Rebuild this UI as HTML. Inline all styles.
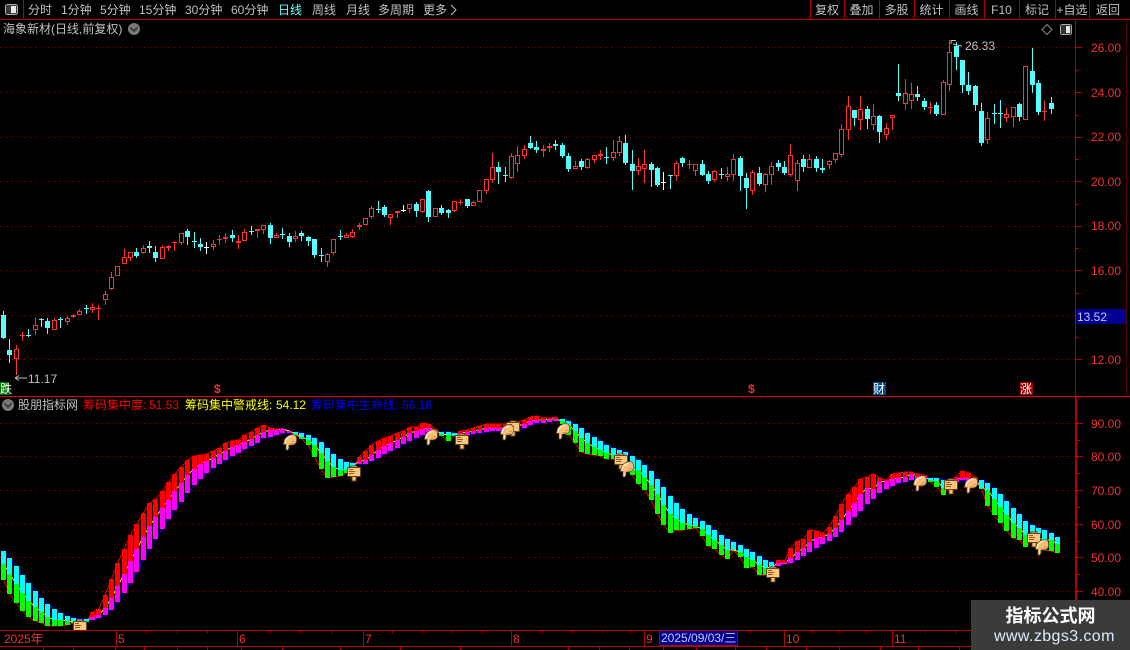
<!DOCTYPE html>
<html lang="zh"><head><meta charset="utf-8"><title>海象新材</title>
<style>
html,body{margin:0;padding:0;background:#000;width:1130px;height:650px;overflow:hidden}
body{position:relative;font-family:"Liberation Sans","WenQuanYi Zen Hei","Noto Sans CJK SC",sans-serif;font-size:12px;color:#c0c0c0}
svg{position:absolute;left:0;top:0}
.t{position:absolute;white-space:nowrap;line-height:14px}
.c{text-align:center}
.p{color:#f03232;letter-spacing:0}
.a{color:#f03232}
</style></head><body>
<svg id="s" width="1130" height="650" viewBox="0 0 1130 650" shape-rendering="crispEdges">
<defs>
<symbol id="hand" viewBox="0 0 14 16" overflow="visible">
<path d="M.5 9.500L1.500 5.500L3.500 3L6 1.500L9 .5L12 1L13.500 3.500L13.500 8L12 10L9.500 11L6 11L6 14L5 16L3 16L3 10.500L.5 10.500Z" fill="#f9bf78" stroke="#6a4520" stroke-width=".7" shape-rendering="auto"/>
<path d="M2 9L3 5.500L6 3L9 2" fill="none" stroke="#fff0dc" stroke-width="1.100" shape-rendering="auto"/>
<path d="M4 11V15" stroke="#fff0dc" stroke-width="1" shape-rendering="auto"/>
<path d="M7 9.500H11M9 7.500H12" stroke="#d08a40" stroke-width=".7" shape-rendering="auto"/>
</symbol>
<symbol id="sign" viewBox="0 0 14 15" overflow="visible">
<rect x="4" y="0" width="6" height="2" fill="#f9c680" stroke="#6d4414" stroke-width=".6"/>
<rect x="5" y="10" width="4" height="5" fill="#f9c680" stroke="#6d4414" stroke-width=".8"/>
<rect x=".5" y="1.500" width="13" height="9" rx="1" fill="#f9c680" stroke="#6d4414"/>
<rect x="2" y="3" width="4" height="1" fill="#8f5c20"/>
<rect x="2" y="5" width="6" height="1" fill="#8f5c20"/>
<rect x="2" y="7" width="5" height="1" fill="#8f5c20"/>
</symbol>
</defs>
<g id="grid"></g><g id="ind"></g><g id="can"></g>
<use href="#hand" x="283" y="434" width="14" height="16"/>
<use href="#hand" x="424" y="429" width="14" height="16"/>
<use href="#sign" x="506" y="421" width="14" height="15"/>
<use href="#hand" x="500" y="424" width="14" height="16"/>
<use href="#hand" x="556" y="423" width="14" height="16"/>
<use href="#sign" x="614" y="454" width="14" height="15"/>
<use href="#hand" x="620" y="461" width="14" height="16"/>
<use href="#hand" x="913" y="475" width="14" height="16"/>
<use href="#hand" x="964" y="477" width="14" height="16"/>
<use href="#sign" x="1027" y="532" width="14" height="15"/>
<use href="#hand" x="1035" y="539" width="14" height="16"/>
<use href="#sign" x="73" y="620" width="14" height="15"/>
<use href="#sign" x="347" y="466" width="14" height="15"/>
<use href="#sign" x="455" y="434" width="14" height="15"/>
<use href="#sign" x="766" y="567" width="14" height="15"/>
<use href="#sign" x="944" y="479" width="14" height="15"/>
<rect x="0" y="630" width="1075" height="20" fill="#000"/>
<g id="fr"></g>
<!-- top-left icon -->
<rect x="5.500" y="4.500" width="12" height="10" rx="2" fill="#3a3a3a" stroke="#a8a8a8"/>
<rect x="11" y="6" width="5" height="7" fill="#e8e8e8"/>
<!-- top right icons -->
<path shape-rendering="auto" d="M1047 24.500L1052 29.500L1047 34.500L1042 29.500Z" fill="none" stroke="#8a8a8a"/>
<rect x="1060.500" y="24.500" width="11" height="10" rx="2" fill="#333" stroke="#a8a8a8"/>
<rect x="1066" y="26" width="4" height="7" fill="#e8e8e8"/>
<!-- chevrons -->
<circle shape-rendering="auto" cx="134" cy="29" r="6" fill="#787878"/>
<path shape-rendering="auto" d="M130.500 27.500L134 31L137.500 27.500" fill="none" stroke="#2a2a2a" stroke-width="1.500"/>
<circle shape-rendering="auto" cx="8" cy="405" r="6" fill="#787878"/>
<path shape-rendering="auto" d="M4.500 403.500L8 407L11.500 403.500" fill="none" stroke="#2a2a2a" stroke-width="1.500"/>
<!-- more chevron -->
<path shape-rendering="auto" d="M451 5L456 10L451 15" fill="none" stroke="#c0c0c0"/>
<!-- low/high arrows -->
<path shape-rendering="auto" d="M15 378H27M15 378L19 375.500M15 378L19 380.500" fill="none" stroke="#c0c0c0"/>
<path shape-rendering="auto" d="M951 40.500H956M953 44L962 46M951 40.500L951 44" fill="none" stroke="#c0c0c0"/>
<!-- watermark -->
<rect x="971" y="600" width="159" height="50" fill="#3d3a3a"/>
<!-- blue boxes -->
<rect x="1076" y="309" width="50" height="15" fill="#000090"/>
<rect x="659.500" y="630.500" width="78" height="15" fill="#000090" stroke="#b00000"/>
<!-- signals -->
<rect x="0" y="382" width="9" height="13" fill="#007a00"/>
<rect x="873" y="382" width="13" height="13" fill="#004a8a"/>
<rect x="1020" y="382" width="13" height="13" fill="#a00000"/>
</svg>

<div class="t" style="left:28px;top:3px">分时</div>
<div class="t" style="left:61px;top:3px">1分钟</div>
<div class="t" style="left:100px;top:3px">5分钟</div>
<div class="t" style="left:139px;top:3px">15分钟</div>
<div class="t" style="left:185px;top:3px">30分钟</div>
<div class="t" style="left:231px;top:3px">60分钟</div>
<div class="t" style="left:278px;top:3px;color:#66ffff">日线</div>
<div class="t" style="left:312px;top:3px">周线</div>
<div class="t" style="left:346px;top:3px">月线</div>
<div class="t" style="left:378px;top:3px">多周期</div>
<div class="t" style="left:423px;top:3px">更多</div>

<div class="t c" style="left:810px;width:34px;top:3px">复权</div>
<div class="t c" style="left:844px;width:35px;top:3px">叠加</div>
<div class="t c" style="left:879px;width:35px;top:3px">多股</div>
<div class="t c" style="left:914px;width:35px;top:3px">统计</div>
<div class="t c" style="left:949px;width:35px;top:3px">画线</div>
<div class="t c" style="left:984px;width:35px;top:3px">F10</div>
<div class="t c" style="left:1019px;width:36px;top:3px">标记</div>
<div class="t c" style="left:1055px;width:34px;top:3px">+自选</div>
<div class="t c" style="left:1089px;width:38px;top:3px">返回</div>

<div class="t" style="left:3px;top:22px">海象新材(日线,前复权)</div>
<div class="t" style="left:965px;top:39px">26.33</div>
<div class="t" style="left:28px;top:372px">11.17</div>

<div class="t p" style="left:1091px;top:41px">26.00</div>
<div class="t p" style="left:1091px;top:86px">24.00</div>
<div class="t p" style="left:1091px;top:130px">22.00</div>
<div class="t p" style="left:1091px;top:175px">20.00</div>
<div class="t p" style="left:1091px;top:219px">18.00</div>
<div class="t p" style="left:1091px;top:264px">16.00</div>
<div class="t p" style="left:1091px;top:353px">12.00</div>
<div class="t" style="left:1077px;top:310px;color:#c8c8ff">13.52</div>

<div class="t" style="left:0;top:382px;color:#fff">跌</div>
<div class="t" style="left:214px;top:382px;color:#f03030;font-weight:bold">$</div>
<div class="t" style="left:748px;top:382px;color:#f03030;font-weight:bold">$</div>
<div class="t" style="left:873px;top:382px;color:#fff">财</div>
<div class="t" style="left:1020px;top:382px;color:#fff">涨</div>

<div class="t" style="left:18px;top:398px">股朋指标网</div>
<div class="t" style="left:83px;top:398px;color:#f00">筹码集中度:</div>
<div class="t" style="left:149px;top:398px;color:#f00">51.53</div>
<div class="t" style="left:185px;top:398px;color:#ff0">筹码集中警戒线:</div>
<div class="t" style="left:276px;top:398px;color:#ff0">54.12</div>
<div class="t" style="left:311px;top:398px;color:#00f">筹码集中生命线:</div>
<div class="t" style="left:402px;top:398px;color:#00f">56.16</div>

<div class="t p" style="left:1091px;top:417px">90.00</div>
<div class="t p" style="left:1091px;top:450px">80.00</div>
<div class="t p" style="left:1091px;top:484px">70.00</div>
<div class="t p" style="left:1091px;top:518px">60.00</div>
<div class="t p" style="left:1091px;top:551px">50.00</div>
<div class="t p" style="left:1091px;top:585px">40.00</div>

<div class="t a" style="left:4px;top:632px">2025年</div>
<div class="t a" style="left:118px;top:632px">5</div>
<div class="t a" style="left:239px;top:632px">6</div>
<div class="t a" style="left:365px;top:632px">7</div>
<div class="t a" style="left:513px;top:632px">8</div>
<div class="t a" style="left:646px;top:632px">9</div>
<div class="t" style="left:661px;top:631px;color:#c8c8ff">2025/09/03/三</div>
<div class="t a" style="left:786px;top:632px">10</div>
<div class="t a" style="left:894px;top:632px">11</div>

<div class="t" style="left:971px;width:159px;text-align:center;top:606px;line-height:20px;font-size:18px;font-weight:bold;color:#fff">指标公式网</div>
<div class="t" style="left:994px;top:628px;line-height:18px;font-size:16px;color:#dcecff;letter-spacing:.4px">www.zbgs3.com</div>

<script>
var S='http://www.w3.org/2000/svg';
function el(p,n,a){var e=document.createElementNS(S,n);for(var k in a)e.setAttribute(k,a[k]);p.appendChild(e);return e}
function R(p,x,y,w,h,f){el(p,'rect',{x:x,y:y,width:w,height:h,fill:f})}
var grid=document.getElementById('grid'),ind=document.getElementById('ind'),can=document.getElementById('can'),fr=document.getElementById('fr');
[47,92,137,181,226,270,315,359,423,456,490,524,557,591].forEach(function(y){el(grid,'line',{x1:0,x2:1075,y1:y+.5,y2:y+.5,stroke:'#a00000','stroke-dasharray':'1 5'})});

/* indicator: top, mid, bottom */
var B=[[551,564,580],[558,574,594],[566,584,603],[575,593,611],[583,601,617],[591,607,621],[598,612,623],[604,617,626],[609,620,626],[613,620,626],[616,621,625],[618,622,623],[619,621,622],[619,621,622],
[612,617,620],[609,615,618],[595,608,615],[579,598,610],[563,586,602],[549,574,593],[535,561,583],[524,549,572],[513,537,560],[503,526,549],[499,517,539],[491,508,529],[482,500,519],[474,491,510],[467,483,502],[460,475,493],[456,469,485],[455,464,479],[454,461,473],[451,458,468],[448,454,464],[443,451,460],[441,447,456],[440,445,453],[435,442,449],[432,439,446],[428,435,443],[425,432,438],[428,430,437],[429,430,435],[429,429,433],[431,431,433],
[432,434,435],[433,437,439],[435,440,445],[438,445,457],[442,453,469],[448,461,478],[454,467,477],[459,470,476],[462,470,473],[463,466,470],
[457,461,464],[451,460,464],[445,455,461],[441,450,458],[438,446,454],[436,443,451],[433,440,448],[431,437,444],[427,433,441],[427,431,438],[423,429,435],[424,428,432],[429,430,433],
[432,434,436],[432,435,441],[433,435,436],
[431,433,436],[430,432,435],[428,431,434],[426,430,433],[424,428,432],[424,428,431],[424,428,431],[424,428,431],[423,427,431],[422,426,430],[420,424,428],[417,421,425],[416,420,423],[418,420,423],[418,419,422],[417,419,421],
[419,421,424],[421,425,435],[424,431,443],[428,438,452],[433,443,454],[437,447,455],[441,450,456],[445,453,459],[448,455,459],[450,455,462],[452,458,466],[456,470,475],[460,470,484],[465,477,490],[471,485,500],[479,494,514],[487,505,525],[496,514,533],[503,519,530],[509,523,530],[514,525,529],[518,526,528],[521,529,536],[525,535,546],[530,540,549],[535,545,555],[539,550,559],[542,550,550],[545,552,557],[549,557,568],[552,560,567],[556,565,575],[560,568,575],[562,567,570],
[560,563,566],[561,563,564],[548,558,563],[541,552,560],[539,548,556],[530,542,552],[531,538,548],[533,537,544],[527,534,541],[516,528,537],[504,520,532],[494,511,525],[487,503,517],[479,494,511],[477,488,504],[474,489,499],[478,482,493],[480,481,489],[474,479,486],[473,478,483],[472,477,482],[472,474,480],[474,476,479],[475,477,479],
[478,480,482],[478,481,487],[480,488,495],[480,483,487],
[477,479,482],[471,478,480],[473,478,482],[477,479,482],
[480,488,489],[483,490,506],[488,499,515],[494,507,523],[501,515,531],[508,523,538],[514,528,540],[521,535,547],[525,535,540],[528,538,546],[530,540,550],[533,540,551],[537,544,553]];
var UP=[[14,45],[56,68],[72,87],[122,145],[150,153]];
function isUp(i){return UP.some(function(r){return i>=r[0]&&i<=r[1]})}
var rp=[],bp=[],yp=[];
B.forEach(function(b,i){var cx=3.5+6.35*i,u=isUp(i);rp.push(cx+','+(u?b[0]:b[2]));bp.push(cx+','+(u?b[2]:b[0]));yp.push(cx+','+b[1])});
[[rp,'#ff0000'],[bp,'#0000ff'],[yp,'#ffff00']].forEach(function(l){el(ind,'polyline',{points:l[0].join(' '),fill:'none',stroke:l[1],'stroke-width':1,'shape-rendering':'auto'})});
B.forEach(function(b,i){var x=Math.round(1+6.35*i),u=isUp(i);
 R(ind,x,b[0],5,b[1]-b[0],u?'#ff0000':'#00ffff');
 R(ind,x,b[1],5,b[2]-b[1],u?'#ff00ff':'#00ff00');
});

/* candles: type, bodyTop, bodyBot, high, low */
var C=[['c',315,338,311,338],['c',350,355,339,362],['r',349,359,345,375],['r',335,336,332,340],['c',335,336,329,336],['r',325,330,317,335],['c',319,320,318,326],['c',321,328,318,333],['r',320,330,318,330],['c',319,320,317,327],['r',318,322,316,325],['r',315,317,314,317],['r',311,315,309,315],['c',308,309,305,313],['r',307,310,303,313],['r',308,309,305,319],['r',294,300,291,305],['r',277,289,272,290],['r',266,276,266,276],['r',257,264,249,264],['r',252,258,252,261],['c',252,256,248,257],['r',248,253,245,254],['c',246,248,241,252],['c',252,258,246,261],['r',247,259,245,259],['r',246,248,245,250],['r',242,243,241,250],['r',233,243,233,245],['c',231,237,229,244],['c',241,242,232,247],['c',244,247,238,250],['w',247,248,242,253],['r',244,247,240,250],['r',239,240,235,244],['r',237,239,233,242],['c',235,238,230,241],['r',241,243,235,248],['r',232,241,229,241],['c',231,232,226,234],['r',229,231,229,237],['r',225,230,225,234],['c',225,238,223,243],['r',235,238,233,238],['c',234,235,228,238],['c',236,242,233,246],['r',236,239,231,242],['c',233,236,231,240],['c',237,241,236,245],['c',239,255,239,257],['c',255,256,248,261],['r',254,262,253,267],['r',239,253,239,255],['c',236,237,230,239],['r',235,238,233,238],['r',232,237,229,238],
['r',225,227,223,229],['r',218,225,218,225],['r',208,217,206,219],['c',209,210,201,212],['c',207,215,205,216],['r',214,218,214,225],['r',211,213,211,217],['w',210,211,205,211],['r',204,209,204,213],['c',204,211,202,216],['r',199,212,199,213],['c',191,217,190,221],['r',208,217,208,217],['c',208,213,205,214],['c',210,213,209,217],['r',201,211,201,212],['r',202,203,199,204],['c',199,206,199,207],['r',202,206,201,206],['r',190,202,190,202],['r',179,191,179,194],['r',167,180,153,183],['c',167,172,162,183],['c',175,176,167,181],['r',156,178,153,179],['r',155,164,146,172],['r',149,156,145,159],['c',143,148,136,148],['c',147,150,141,152],['r',149,151,145,156],['r',146,148,143,151],['c',144,146,140,149],['c',145,156,143,157],['c',156,169,153,171],['r',166,169,161,169],['c',161,167,159,169],['r',159,168,158,169],['r',155,160,155,163],
['r',154,156,150,159],['c',157,158,147,163],['r',152,158,140,161],['r',141,153,136,156],['c',143,163,135,164],['c',164,171,150,189],['r',166,171,158,175],['r',164,169,150,183],['c',164,170,162,186],['c',168,185,167,186],['w',182,183,172,189],['c',175,176,175,188],['r',163,176,161,181],['c',158,163,157,166],['r',164,165,160,168],['r',164,171,164,176],['c',164,175,160,175],['c',174,181,171,183],['r',171,180,170,182],['c',174,175,168,178],['r',174,177,167,181],['r',159,175,154,181],['c',158,176,156,190],['c',178,188,173,208],['r',172,191,170,195],['c',173,184,167,185],['r',174,185,173,192],['r',166,175,162,185],['c',163,167,160,170],['c',167,173,161,174],['r',155,175,144,177],['r',163,181,160,191],['c',159,167,155,171],['r',159,168,154,168],['c',159,168,156,171],['c',168,170,159,172],['r',161,165,160,169],['r',153,160,153,163],['r',129,155,124,157],
['r',106,130,96,140],['c',110,118,110,125],['r',109,120,96,130],['c',109,119,106,128],['r',116,125,104,130],['c',116,132,115,142],['r',128,135,123,140],['r',115,118,115,130],['c',93,96,64,100],['r',93,104,79,110],['r',94,101,83,109],['c',94,97,86,100],['c',101,107,98,109],['r',107,108,102,113],['c',105,114,102,115],['r',82,115,80,115],['r',52,85,40,91],['c',46,57,42,69],['c',60,85,60,92],['c',85,91,72,94],['c',86,105,85,110],['c',111,143,103,145],['r',118,140,112,144],['c',113,114,104,123],['c',113,114,100,127],['r',114,118,108,122],['r',107,117,107,127],['c',104,117,103,120],['r',66,120,66,120],['c',71,85,48,92],['c',83,112,80,114],['r',111,112,101,120],['c',103,109,97,113]];
C.forEach(function(c,i){
 var t=c[0],x=Math.round(1+6.35*i),cx=x+2,top=c[1],bot=c[2],hi=c[3],lo=c[4],h=bot-top;
 var col=t=='r'?'#ff3232':t=='w'?'#ffffff':'#54ffff';
 if(t=='c'||t=='w'||h<=2){
  R(can,cx,hi,1,lo-hi+1,col);
  R(can,x,top,5,Math.max(h,1),col);
 }else{
  if(hi<top)R(can,cx,hi,1,top-hi,col);
  if(lo>bot)R(can,cx,bot,1,lo-bot,col);
  el(can,'rect',{x:x+.5,y:top+.5,width:4,height:h-1,fill:'#000',stroke:col});
 }
});

/* frame */
var LR='#b00000',BR='#e00000';
R(fr,0,19,1130,1,LR);
[23,810,844,879,914,949,984,1019,1055,1089].forEach(function(x){R(fr,x,0,1,19,LR)});
R(fr,1075,20,1,376,LR);
R(fr,1126,20,1,376,'#5a0000');
R(fr,1075,397,2,253,LR);
R(fr,0,396,1130,1,BR);
R(fr,0,630,971,1,LR);R(fr,0,646,971,1,LR);
[116,237,363,511,644,784,892].forEach(function(x){R(fr,x,630,1,16,LR)});
[146,177,207,270,300,331,392,422,452,482,542,572,602,630,750,812,838,866,925,955].forEach(function(x){R(fr,x,631,1,2,LR)});
[43,73,115,144,177,207,241,282,340,400,460,568,599,629,663,696,735,766,806,839,880,918,959].forEach(function(x){R(fr,x,646,1,4,LR)});
[47,92,137,181,226,270,359].forEach(function(y){R(fr,1076,y,6,1,LR)});
[70,115,159,204,248,293,337].forEach(function(y){R(fr,1076,y,3,1,LR)});
[423,456,490,524,557,591].forEach(function(y){R(fr,1077,y,6,1,LR)});
[440,473,507,541,574,608].forEach(function(y){R(fr,1077,y,3,1,LR)});
</script>
</body></html>
